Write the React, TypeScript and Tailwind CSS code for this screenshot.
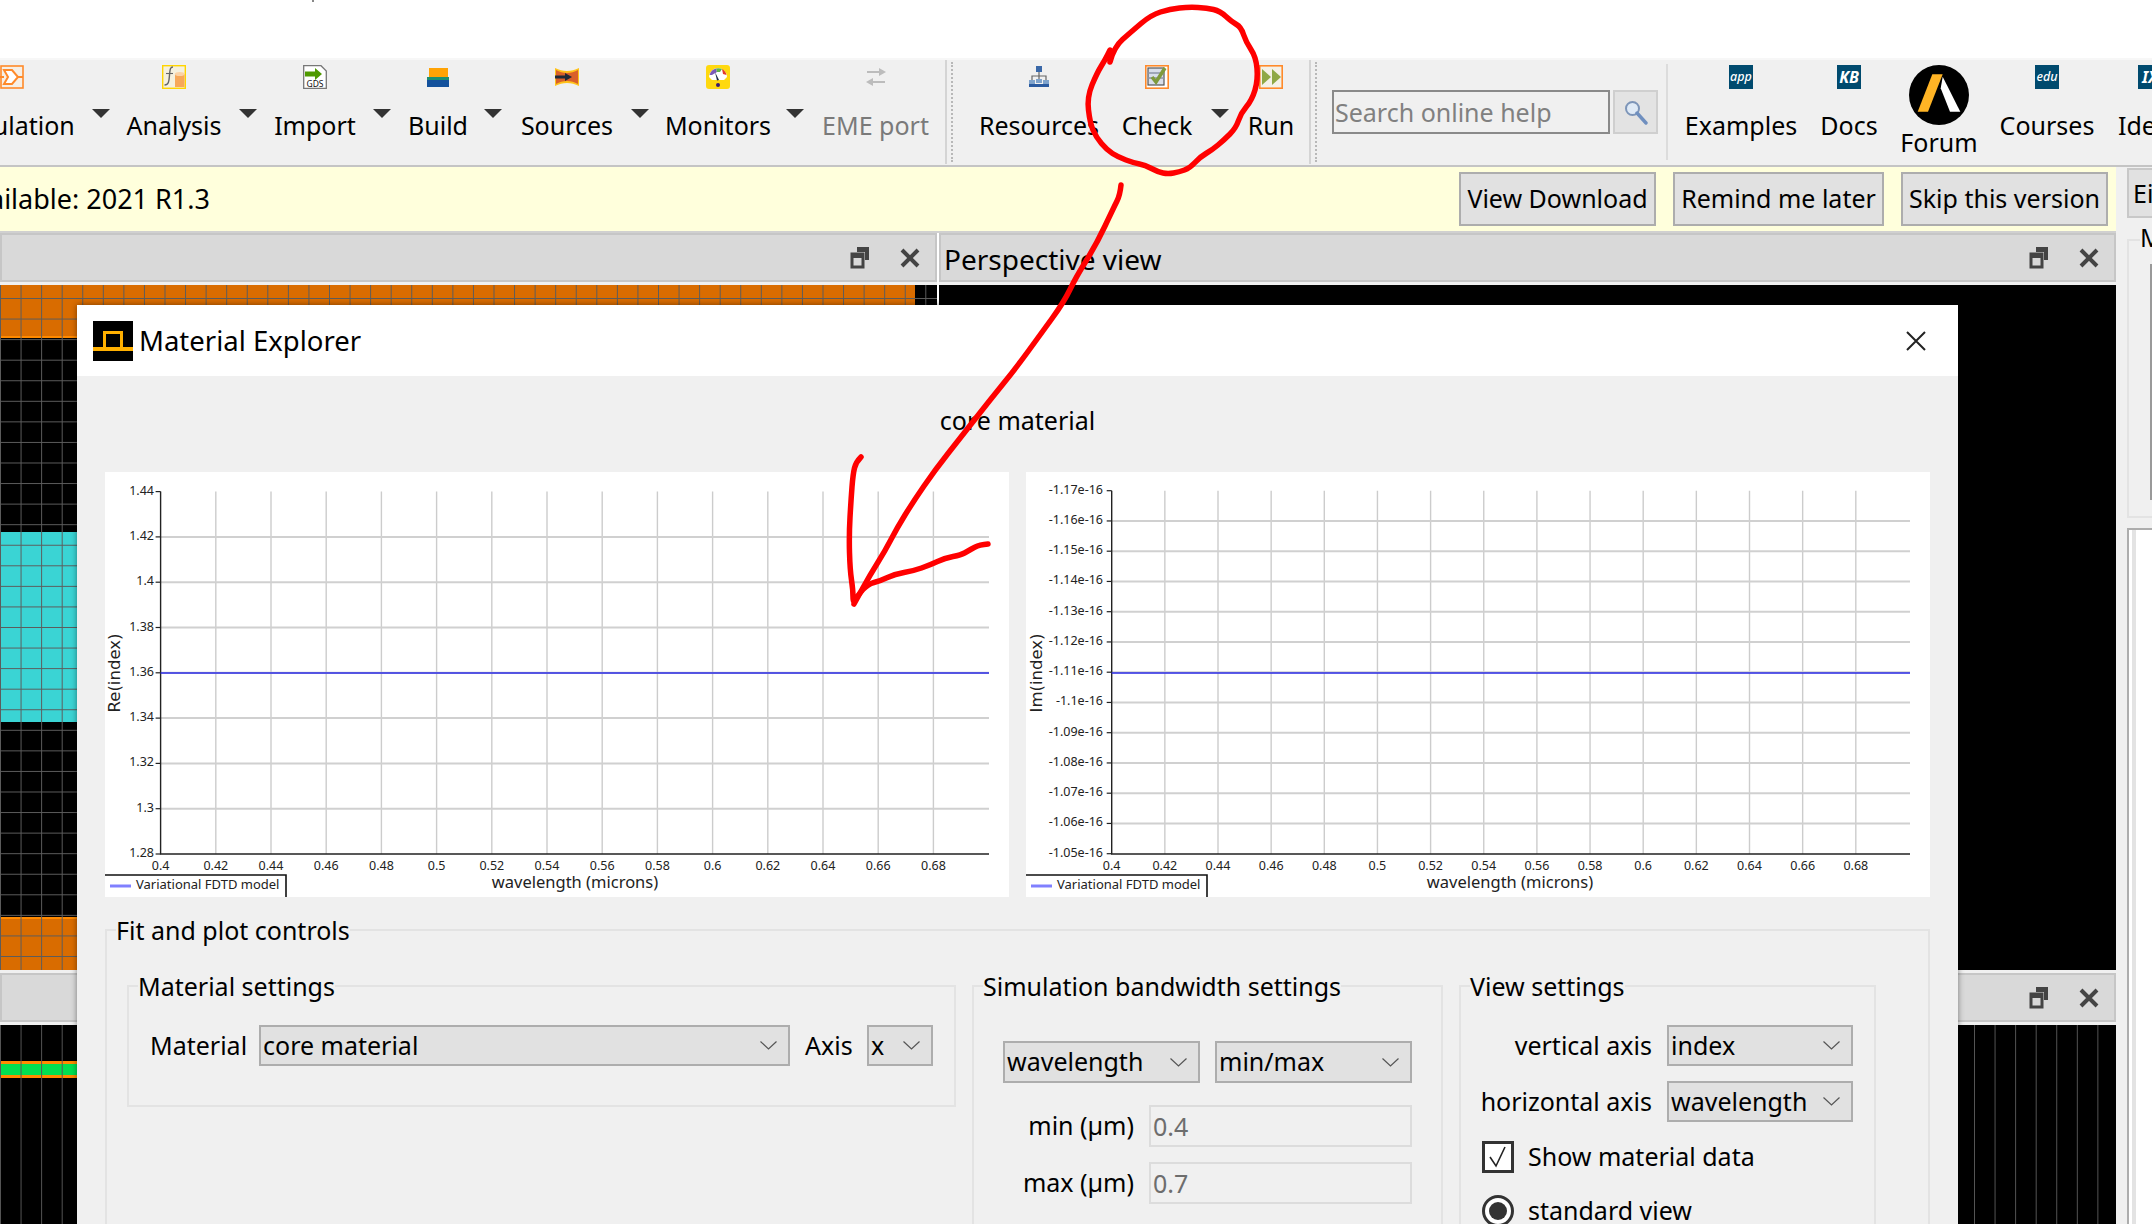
import type { ReactNode } from "react";

function smooth(pts: number[][]) {
  let d = `M${pts[0][0]} ${pts[0][1]}`;
  for (let i = 1; i < pts.length - 1; i++) {
    const mx = (pts[i][0] + pts[i + 1][0]) / 2;
    const my = (pts[i][1] + pts[i + 1][1]) / 2;
    d += ` Q${pts[i][0]} ${pts[i][1]} ${mx} ${my}`;
  }
  const last = pts[pts.length - 1];
  return d + ` L${last[0]} ${last[1]}`;
}

const circlePts = [
  [1110, 62], [1114, 47], [1131, 32], [1151, 15], [1170, 9], [1189, 7], [1207, 8], [1220, 11], [1232, 22], [1241, 27],
  [1246, 42], [1256, 57], [1258, 80], [1252, 100], [1241, 113], [1236, 128], [1224, 140], [1212, 150], [1200, 157],
  [1190, 168], [1179, 172], [1168, 174], [1158, 172], [1145, 165], [1134, 163], [1118, 157], [1107, 150], [1096, 137],
  [1090, 123], [1087, 97], [1097, 73], [1105, 60], [1110, 50],
];
const arrowPts = [
  [1121, 185], [1120, 195], [1114, 207], [1096, 245], [1076, 277], [1064, 302], [1040, 335], [1016, 368], [990, 400],
  [961, 437], [935, 470], [913, 502], [897, 528], [885, 551], [870, 575], [854, 604],
];
const headPts = [
  [861, 457], [856, 462], [853, 474], [851, 500], [849, 535], [850, 570], [853, 590], [853, 604], [858, 595], [868, 584],
  [880, 581], [895, 574], [913, 571], [930, 565], [945, 558], [961, 555], [968, 551], [975, 547], [980, 545], [988, 544],
];

function ToolIcon({ name }: { name: string }) {
  if (name === "sim")
    return (
      <svg width="24" height="24" viewBox="0 0 24 24">
        <rect x="1" y="1" width="22" height="22" fill="#f6efe6" stroke="#ff8a2a" strokeWidth="1.6" />
        <path d="M0 12H4M4 5H12L18 12L12 19H4L8 12Z" fill="#fff" stroke="#ff8a2a" strokeWidth="2" />
        <path d="M18 12H23" stroke="#ff8a2a" strokeWidth="2" />
      </svg>
    );
  if (name === "analysis")
    return (
      <svg width="24" height="24" viewBox="0 0 24 24">
        <rect x="0.7" y="0.7" width="22.6" height="22.6" fill="#f5f0de" stroke="#ffd400" strokeWidth="1.4" />
        <path d="M11 2C8 2 8 5 7.5 10C7 16 7 20 2.5 20" fill="none" stroke="#666" strokeWidth="1.4" />
        <path d="M4 8.5H11" stroke="#666" strokeWidth="1.1" />
        <rect x="13" y="9" width="9.5" height="13" fill="#f7a85a" />
        <ellipse cx="17.7" cy="9" rx="4.8" ry="2" fill="#fbd2a6" />
      </svg>
    );
  if (name === "gds")
    return (
      <svg width="24" height="24" viewBox="0 0 24 24">
        <path d="M0.7 0.7H18L23.3 6V23.3H0.7Z" fill="#fff" stroke="#777" strokeWidth="1.3" />
        <path d="M2 6.5H12V3L19 9L12 15V11.5H2Z" fill="#4f9a00" />
        <text x="12" y="22" textAnchor="middle" fontSize="8.5" fill="#111">GDS</text>
      </svg>
    );
  if (name === "build")
    return (
      <svg width="24" height="24" viewBox="0 0 24 24">
        <rect x="3" y="3" width="19" height="9" fill="#ffa305" />
        <rect x="1" y="12" width="22" height="3" fill="#1d8f72" />
        <rect x="1" y="15" width="22" height="7" fill="#13519c" />
      </svg>
    );
  if (name === "sources")
    return (
      <svg width="24" height="24" viewBox="0 0 24 24">
        <path d="M0 3C8 7 16 7 24 3V21C16 17 8 17 0 21Z" fill="#ffc21a" />
        <path d="M1 5C8 9 16 9 23 5V19C16 15 8 15 1 19Z" fill="#d9602a" />
        <path d="M0 10.5H10V8L17 12L10 16V13.5H0Z" fill="#1f2a38" />
      </svg>
    );
  if (name === "monitors")
    return (
      <svg width="24" height="24" viewBox="0 0 24 24">
        <rect x="0" y="0" width="24" height="24" rx="3" fill="#ffd90f" />
        <path d="M3 12A9 9 0 0 1 21 12L18 15H6Z" fill="#fff" />
        <path d="M3.5 10A9 9 0 0 1 10 3.5L11 7L6 10Z" fill="#7a5ab8" />
        <path d="M10 3.5A9 9 0 0 1 16 4L14 7H11Z" fill="#5cb34a" />
        <path d="M16 4A9 9 0 0 1 20.5 10L17 9Z" fill="#e23a2a" />
        <path d="M9 7L13 15L11 15.5Z" fill="#1a2a44" />
        <circle cx="12" cy="20" r="2" fill="#3a1a6e" />
      </svg>
    );
  if (name === "eme")
    return (
      <svg width="24" height="24" viewBox="0 0 24 24">
        <path d="M3 6H15V3L22 7L15 11V8H3Z" fill="#bcbcbc" />
        <path d="M21 16H9V13L2 17L9 21V18H21Z" fill="#bcbcbc" />
      </svg>
    );
  if (name === "resources")
    return (
      <svg width="24" height="24" viewBox="0 0 24 24">
        <rect x="9" y="1" width="6" height="6" fill="#3a68a8" />
        <path d="M12 7V11M5 15V11H19V15M12 11V15" fill="none" stroke="#666" strokeWidth="1.2" />
        <rect x="9" y="14" width="6" height="4" fill="#7fa3cc" />
        <rect x="2" y="15" width="6" height="4" fill="#7fa3cc" />
        <rect x="16" y="15" width="6" height="4" fill="#7fa3cc" />
        <rect x="2" y="19" width="20" height="3" fill="#2a5aa0" />
      </svg>
    );
  if (name === "check")
    return (
      <svg width="24" height="24" viewBox="0 0 24 24">
        <rect x="0.8" y="0.8" width="22.4" height="22.4" fill="#fff" stroke="#ff8a2a" strokeWidth="1.6" />
        <rect x="3" y="3" width="16" height="17" fill="#d8deea" stroke="#555" strokeWidth="1.2" />
        <path d="M3 8H19M3 13H19" stroke="#8a94a8" strokeWidth="1.4" />
        <path d="M7 12L11 17L20 3" fill="none" stroke="#7f9a3c" strokeWidth="3.6" />
      </svg>
    );
  if (name === "run")
    return (
      <svg width="24" height="24" viewBox="0 0 24 24">
        <rect x="0.8" y="0.8" width="22.4" height="22.4" fill="#f4f1e8" stroke="#ff8a2a" strokeWidth="1.6" />
        <path d="M3 4L12 12L3 20Z" fill="#8fa846" />
        <path d="M13 4L22 12L13 20Z" fill="#8fa846" />
      </svg>
    );
  return null;
}

function BlueBadge({ label, big }: { label: string; big?: boolean }) {
  return (
    <div
      className={`w-[24px] h-[24px] bg-[#004a6e] flex items-center justify-center text-white italic leading-none ${
        big ? "text-[16px] font-bold" : "text-[12.5px] font-medium"
      }`}
    >
      {label}
    </div>
  );
}

function Caret() {
  return (
    <div className="pt-[49px] flex justify-center">
      <svg width="18" height="9" viewBox="0 0 18 9">
        <path d="M0 0H18L9 9Z" fill="#333" />
      </svg>
    </div>
  );
}

function ToolItem({ width, label, icon, muted }: { width: string; label: string; icon: ReactNode; muted?: boolean }) {
  return (
    <div className={`${width} shrink-0 flex flex-col items-center pt-[5px]`}>
      <div className="h-[24px] w-[24px]">{icon}</div>
      <div className={`mt-[18px] h-[36px] leading-[36px] whitespace-nowrap ${muted ? "text-[#7a7a7a]" : ""}`}>{label}</div>
    </div>
  );
}

function ToolSep() {
  return <div className="w-[2px] h-[104px] bg-[#d4d4d4] shrink-0" />;
}
function ToolDots() {
  return <div className="w-[2px] h-[100px] ml-[4px] mt-[2px] border-l-2 border-dotted border-[#b8b8b8] shrink-0" />;
}

function Toolbar() {
  return (
    <div className="h-[109px] bg-[#f0f0f0] border-t-2 border-[#f7f7f7] border-b-2 border-b-[#c4c4c4] flex -ml-[64px] w-[2300px] items-start overflow-hidden">
      <ToolItem width="w-[152px]" label="Simulation" icon={<ToolIcon name="sim" />} />
      <div className="w-[26px] shrink-0"><Caret /></div>
      <ToolItem width="w-[120px]" label="Analysis" icon={<ToolIcon name="analysis" />} />
      <div className="w-[28px] shrink-0"><Caret /></div>
      <ToolItem width="w-[106px]" label="Import" icon={<ToolIcon name="gds" />} />
      <div className="w-[28px] shrink-0"><Caret /></div>
      <ToolItem width="w-[84px]" label="Build" icon={<ToolIcon name="build" />} />
      <div className="w-[26px] shrink-0"><Caret /></div>
      <ToolItem width="w-[122px]" label="Sources" icon={<ToolIcon name="sources" />} />
      <div className="w-[24px] shrink-0"><Caret /></div>
      <ToolItem width="w-[132px]" label="Monitors" icon={<ToolIcon name="monitors" />} />
      <div className="w-[22px] shrink-0"><Caret /></div>
      <ToolItem width="w-[139px]" label="EME port" icon={<ToolIcon name="eme" />} muted />
      <ToolSep />
      <ToolDots />
      <div className="w-[4px] shrink-0" />
      <ToolItem width="w-[164px]" label="Resources" icon={<ToolIcon name="resources" />} />
      <ToolItem width="w-[72px]" label="Check" icon={<ToolIcon name="check" />} />
      <div className="w-[54px] shrink-0"><Caret /></div>
      <ToolItem width="w-[48px]" label="Run" icon={<ToolIcon name="run" />} />
      <div className="w-[14px] shrink-0" />
      <ToolSep />
      <ToolDots />
      <div className="ml-[15px] mt-[30px] w-[278px] h-[44px] border-2 border-[#8a8a8a] bg-[#f0f0f0] text-[#808080] leading-[41px] pl-[1px] shrink-0">
        Search online help
      </div>
      <div className="ml-[3px] mt-[30px] w-[45px] h-[44px] bg-[#e3e3e3] border-2 border-[#cfcfcf] flex items-center justify-center shrink-0">
        <svg width="26" height="26" viewBox="0 0 26 26">
          <circle cx="9.5" cy="9.5" r="6.5" fill="#dfeaf6" stroke="#7d95b8" strokeWidth="2" />
          <path d="M14 14L23 24" stroke="#6f8fbf" strokeWidth="3.4" strokeLinecap="round" />
        </svg>
      </div>
      <div className="ml-[8px] shrink-0 mt-[4px]">
        <div className="w-[2px] h-[96px] bg-[#dcdcdc]" />
      </div>
      <ToolItem width="w-[146px]" label="Examples" icon={<BlueBadge label="app" />} />
      <ToolItem width="w-[70px]" label="Docs" icon={<BlueBadge label="KB" big />} />
      <div className="w-[110px] shrink-0 flex flex-col items-center pt-[5px]">
        <svg width="60" height="60" viewBox="0 0 60 60">
          <circle cx="30" cy="30" r="30" fill="#000" />
          <path d="M8.7 46.7L23.3 9.3H33.7L19 46.7Z" fill="#ffb425" />
          <path d="M33.7 11.7L51.3 46.7H41L31.7 23.3Z" fill="#fff" />
        </svg>
        <div className="leading-[36px] -mt-[1px] whitespace-nowrap">Forum</div>
      </div>
      <ToolItem width="w-[106px]" label="Courses" icon={<BlueBadge label="edu" />} />
      <ToolItem width="w-[100px]" label="Ideas" icon={<BlueBadge label="IX" big />} />
    </div>
  );
}

function RestoreClose() {
  return (
    <div className="flex items-center gap-[30px] pr-[15px]">
      <svg width="20" height="23" viewBox="0 0 20 23">
        <path d="M7 1H19V14H15V6H7Z" fill="#444" />
        <rect x="2" y="8" width="11" height="13" fill="none" stroke="#444" strokeWidth="3" />
        <rect x="1" y="8" width="13" height="4" fill="#444" />
      </svg>
      <svg width="20" height="20" viewBox="0 0 20 20">
        <path d="M2 2L18 18M18 2L2 18" stroke="#444" strokeWidth="4" />
      </svg>
    </div>
  );
}

function TitleBar({ title }: { title?: string }) {
  return (
    <div className="h-[49px] bg-[#d9d9d9] border-2 border-[#c6c6c6] flex items-center justify-between pl-[3px]">
      <span className="mt-[2px] text-[28px]">{title}</span>
      <RestoreClose />
    </div>
  );
}

function GridOverlay() {
  return (
    <div className="absolute inset-0 bg-[linear-gradient(#5c5c5c_1.4px,transparent_1.4px),linear-gradient(90deg,#5c5c5c_1.4px,transparent_1.4px)] bg-[size:20.57px_20.57px] bg-[position:0_13px]" />
  );
}

function StripeOverlay() {
  return <div className="absolute inset-0 bg-[linear-gradient(90deg,#555555_1.2px,transparent_1.2px)] bg-[size:20.57px_100%]" />;
}

function Panes() {
  return (
    <div className="flex flex-col">
      <div className="flex">
        <div className="w-[937px] shrink-0">
          <TitleBar />
          <div className="h-[3px] bg-[#f0f0f0]" />
          <div className="relative h-[685px] bg-black flex flex-col">
            <div className="w-[915px] h-[51px] bg-[#d96c00] border-b-2 border-[#ff8a00] box-content" />
            <div className="h-[194px]" />
            <div className="h-[190px] bg-[#3ad4d4]" />
            <div className="h-[195px]" />
            <div className="h-[53px] bg-[#d96c00] border-t-2 border-[#ff8a00]" />
            <GridOverlay />
          </div>
        </div>
        <div className="ml-[2px] flex-1">
          <TitleBar title="Perspective view" />
          <div className="h-[3px] bg-[#f0f0f0]" />
          <div className="h-[685px] bg-black" />
        </div>
      </div>
      <div className="h-[3px] bg-[#f0f0f0]" />
      <TitleBar />
      <div className="h-[3px] bg-[#f0f0f0]" />
      <div className="relative h-[200px] bg-black">
        <div className="w-[937px] pt-[36px]">
          <div className="h-[17px] bg-[#00e050] border-y-[3px] border-[#ff8a00]" />
        </div>
        <StripeOverlay />
      </div>
    </div>
  );
}

function Chart({
  axis,
  stepX,
  stepY,
  top,
  yLabels,
  xLabels,
  yTitle,
  yTitleX,
  xTitleX,
  labelX,
}: {
  axis: number;
  stepX: number;
  stepY: number;
  top: number;
  yLabels: string[];
  xLabels: string[];
  yTitle: string;
  yTitleX: number;
  xTitleX: number;
  labelX: number;
}) {
  const bottom = 382;
  const right = 884;
  return (
    <svg width="904" height="425" viewBox="0 0 904 425" className="bg-white shrink-0 block">
      {xLabels.map((l, i) => (
        <g key={l}>
          {i > 0 && <line x1={axis + i * stepX} x2={axis + i * stepX} y1={top} y2={bottom} stroke="#cccccc" strokeWidth="1.4" />}
          <text x={axis + i * stepX} y="398" textAnchor="middle" fontSize="12.5" fill="#222">
            {l}
          </text>
        </g>
      ))}
      {yLabels.map((l, i) => (
        <g key={l}>
          {i > 0 && i < yLabels.length - 1 && (
            <line x1={axis} x2={right} y1={top + i * stepY} y2={top + i * stepY} stroke="#d0d0d0" strokeWidth="2" />
          )}
          <line x1={axis - 5} x2={axis} y1={top + i * stepY} y2={top + i * stepY} stroke="#222" strokeWidth="1.2" />
          <text x={labelX} y={top + i * stepY + 3} textAnchor="end" fontSize="12.5" fill="#222">
            {l}
          </text>
        </g>
      ))}
      <path d={`M${axis} ${top}V${bottom}H${right}`} fill="none" stroke="#222" strokeWidth="1.4" />
      <line x1={axis} x2={right} y1="201" y2="201" stroke="#2a2ae6" strokeWidth="1.6" />
      <text
        transform={`translate(${yTitleX} 201) rotate(-90)`}
        textAnchor="middle"
        fontSize="16.5"
        fill="#222"
        className="font-['DejaVu_Sans',sans-serif]"
      >
        {yTitle}
      </text>
      <text x={xTitleX} y="416" textAnchor="middle" fontSize="16.5" fill="#222">
        wavelength (microns)
      </text>
      <path d="M0 403H181V425" fill="none" stroke="#111" strokeWidth="1.6" />
      <line x1="5" x2="26" y1="414" y2="414" stroke="#8080ff" strokeWidth="3" />
      <text x="31" y="417" fontSize="13" fill="#222">
        Variational FDTD model
      </text>
    </svg>
  );
}

function Chevron() {
  return (
    <svg width="17" height="9" viewBox="0 0 17 9" className="shrink-0">
      <path d="M0.5 0.5L8.5 8L16.5 0.5" fill="none" stroke="#555" strokeWidth="1.2" />
    </svg>
  );
}

function Combo({ width, height, value }: { width: string; height: string; value: string }) {
  return (
    <div className={`${width} ${height} shrink-0 bg-[#e1e1e1] border-2 border-[#adadad] flex items-center justify-between pl-[2px] pr-[11px]`}>
      <span className="whitespace-nowrap">{value}</span>
      <Chevron />
    </div>
  );
}

function Group({ title, className, children }: { title: string; className: string; children: ReactNode }) {
  return (
    <fieldset className={`border-2 border-[#e3e3e3] ${className}`}>
      <legend className="ml-[9px] h-[36px] leading-[36px] whitespace-nowrap">{title}</legend>
      {children}
    </fieldset>
  );
}

function Dialog() {
  const xs = ["0.4", "0.42", "0.44", "0.46", "0.48", "0.5", "0.52", "0.54", "0.56", "0.58", "0.6", "0.62", "0.64", "0.66", "0.68"];
  const re = ["1.44", "1.42", "1.4", "1.38", "1.36", "1.34", "1.32", "1.3", "1.28"];
  const im = ["-1.17e-16", "-1.16e-16", "-1.15e-16", "-1.14e-16", "-1.13e-16", "-1.12e-16", "-1.11e-16", "-1.1e-16", "-1.09e-16", "-1.08e-16", "-1.07e-16", "-1.06e-16", "-1.05e-16"];
  return (
    <div className="absolute left-[77px] top-[305px] w-[1881px] h-[919px] bg-[#f0f0f0] shadow-[0_0_6px_rgba(0,0,0,0.45)] overflow-hidden">
      <div className="h-[71px] bg-white flex items-center pl-[16px] pr-[32px]">
        <svg width="40" height="40" viewBox="0 0 40 40" className="shrink-0">
          <rect width="40" height="40" fill="#000" />
          <rect y="26" width="40" height="4" fill="#ffb000" />
          <path d="M11.5 27V11.5H28.5V27" fill="none" stroke="#ffb000" strokeWidth="3" />
        </svg>
        <span className="ml-[6px] flex-1 text-[27.5px]">Material Explorer</span>
        <svg width="20" height="20" viewBox="0 0 20 20">
          <path d="M1 1L19 19M19 1L1 19" stroke="#222" strokeWidth="2" />
        </svg>
      </div>
      <div className="h-[96px] flex items-center justify-center">
        <span className="mb-[7px]">core material</span>
      </div>
      <div className="flex gap-[17px] pl-[28px]">
        <Chart axis={55.6} stepX={55.2} stepY={45.3} top={19.6} yLabels={re} xLabels={xs} yTitle="Re(index)" yTitleX={15} xTitleX={470} labelX={49} />
        <Chart axis={85.7} stepX={53.15} stepY={30.25} top={18.7} yLabels={im} xLabels={xs} yTitle="Im(index)" yTitleX={16} xTitleX={484} labelX={77} />
      </div>
      <Group title="Fit and plot controls" className="ml-[28px] mt-[15px] w-[1825px] h-[400px]">
        <div className="flex items-start gap-[16px] pl-[20px] pt-[20px]">
          <Group title="Material settings" className="w-[829px] h-[139px] shrink-0">
            <div className="flex items-center pl-[21px] pt-[21px] gap-[15px]">
              <span className="w-[94px] whitespace-nowrap">Material</span>
              <Combo width="w-[531px]" height="h-[41px]" value="core material" />
              <span className="w-[47px] whitespace-nowrap">Axis</span>
              <Combo width="w-[66px]" height="h-[41px]" value="x" />
            </div>
          </Group>
          <Group title="Simulation bandwidth settings" className="w-[471px] h-[300px] shrink-0">
            <div className="pl-[29px] pt-[37px]">
              <div className="flex gap-[15px]">
                <Combo width="w-[197px]" height="h-[42px]" value="wavelength" />
                <Combo width="w-[197px]" height="h-[42px]" value="min/max" />
              </div>
              <div className="mt-[22px] flex flex-col gap-[15px]">
                {[["min (µm)", "0.4"], ["max (µm)", "0.7"]].map(([label, value]) => (
                  <div key={label} className="flex items-center gap-[15px]">
                    <span className="w-[131px] text-right whitespace-nowrap">{label}</span>
                    <div className="w-[263px] h-[42px] bg-[#f0f0f0] border-2 border-[#dcdcdc] text-[#6d6d6d] leading-[38px] pl-[2px]">{value}</div>
                  </div>
                ))}
              </div>
            </div>
          </Group>
          <Group title="View settings" className="w-[417px] h-[300px] shrink-0">
            <div className="pt-[21px]">
              <div className="flex flex-col gap-[15px]">
                {[["vertical axis", "index"], ["horizontal axis", "wavelength"]].map(([label, value]) => (
                  <div key={label} className="flex items-center gap-[15px]">
                    <span className="w-[191px] text-right whitespace-nowrap">{label}</span>
                    <Combo width="w-[186px]" height="h-[41px]" value={value} />
                  </div>
                ))}
              </div>
              <div className="mt-[19px] pl-[21px] flex items-center gap-[14px] h-[32px]">
                <div className="w-[32px] h-[32px] bg-white border-[3px] border-[#333] flex items-center justify-center">
                  <svg width="20" height="22" viewBox="0 0 20 22">
                    <path d="M2 11L8 20L17 1" fill="none" stroke="#222" strokeWidth="1.6" />
                  </svg>
                </div>
                <span>Show material data</span>
              </div>
              <div className="mt-[22px] pl-[21px] flex items-center gap-[14px] h-[32px]">
                <div className="w-[32px] h-[32px] bg-white border-[3px] border-[#333] rounded-full flex items-center justify-center">
                  <div className="w-[18px] h-[18px] rounded-full bg-[#333]" />
                </div>
                <span>standard view</span>
              </div>
            </div>
          </Group>
        </div>
      </Group>
    </div>
  );
}

function SidePanel() {
  return (
    <div className="w-[36px] shrink-0 bg-[#f0f0f0] overflow-hidden pl-[11px] pt-[1px]">
      <div className="w-[60px] h-[50px] bg-[#e1e1e1] border-2 border-[#c8c8c8] pl-[4px] leading-[46px] whitespace-nowrap">Eigen</div>
      <fieldset className="mt-[4px] w-[60px] h-[296px] border-2 border-[#e3e3e3] overflow-visible">
        <legend className="ml-[11px] h-[36px] leading-[30px]">M</legend>
        <div className="ml-[21px] mt-[6px] h-[236px] w-[30px] border-2 border-[#999]" />
      </fieldset>
      <div className="mt-[10px] h-[700px] w-[60px] bg-white border-2 border-[#adadad] pl-[3px]">
        <div className="w-[4px] h-full bg-[#e3e3e3]" />
      </div>
    </div>
  );
}

export default function App() {
  return (
    <div className="relative w-[2152px] h-[1224px] overflow-hidden bg-white text-[25px] text-black font-['Noto_Sans','Liberation_Sans',sans-serif]">
      <div className="h-[58px] bg-white">
        <div className="ml-[312px] w-[2px] h-[2px] bg-[#888]" />
      </div>
      <Toolbar />
      <div className="flex h-[1057px]">
        <div className="w-[2116px] shrink-0">
          <div className="h-[66px] bg-[#ffffdc] border-b-2 border-[#d0d0d0] flex items-center pr-[8px]">
            <div className="w-[210px] flex justify-end overflow-hidden whitespace-nowrap text-[27px]">New version available: 2021 R1.3</div>
            <div className="flex-1" />
            <div className="flex gap-[17px]">
              <button className="w-[197px] h-[54px] bg-[#e1e1e1] border-2 border-[#adadad] whitespace-nowrap">View Download</button>
              <button className="w-[211px] h-[54px] bg-[#e1e1e1] border-2 border-[#adadad] whitespace-nowrap">Remind me later</button>
              <button className="w-[207px] h-[54px] bg-[#e1e1e1] border-2 border-[#adadad] whitespace-nowrap">Skip this version</button>
            </div>
          </div>
          <Panes />
        </div>
        <SidePanel />
      </div>
      <Dialog />
      <svg width="2152" height="1224" viewBox="0 0 2152 1224" className="absolute inset-0 pointer-events-none" fill="none" stroke="#ff0000" strokeLinecap="round" strokeLinejoin="round">
        <path d={smooth(circlePts)} strokeWidth="5.5" />
        <path d={smooth(arrowPts)} strokeWidth="5.5" />
        <path d={smooth(headPts)} strokeWidth="5.5" />
      </svg>
    </div>
  );
}
